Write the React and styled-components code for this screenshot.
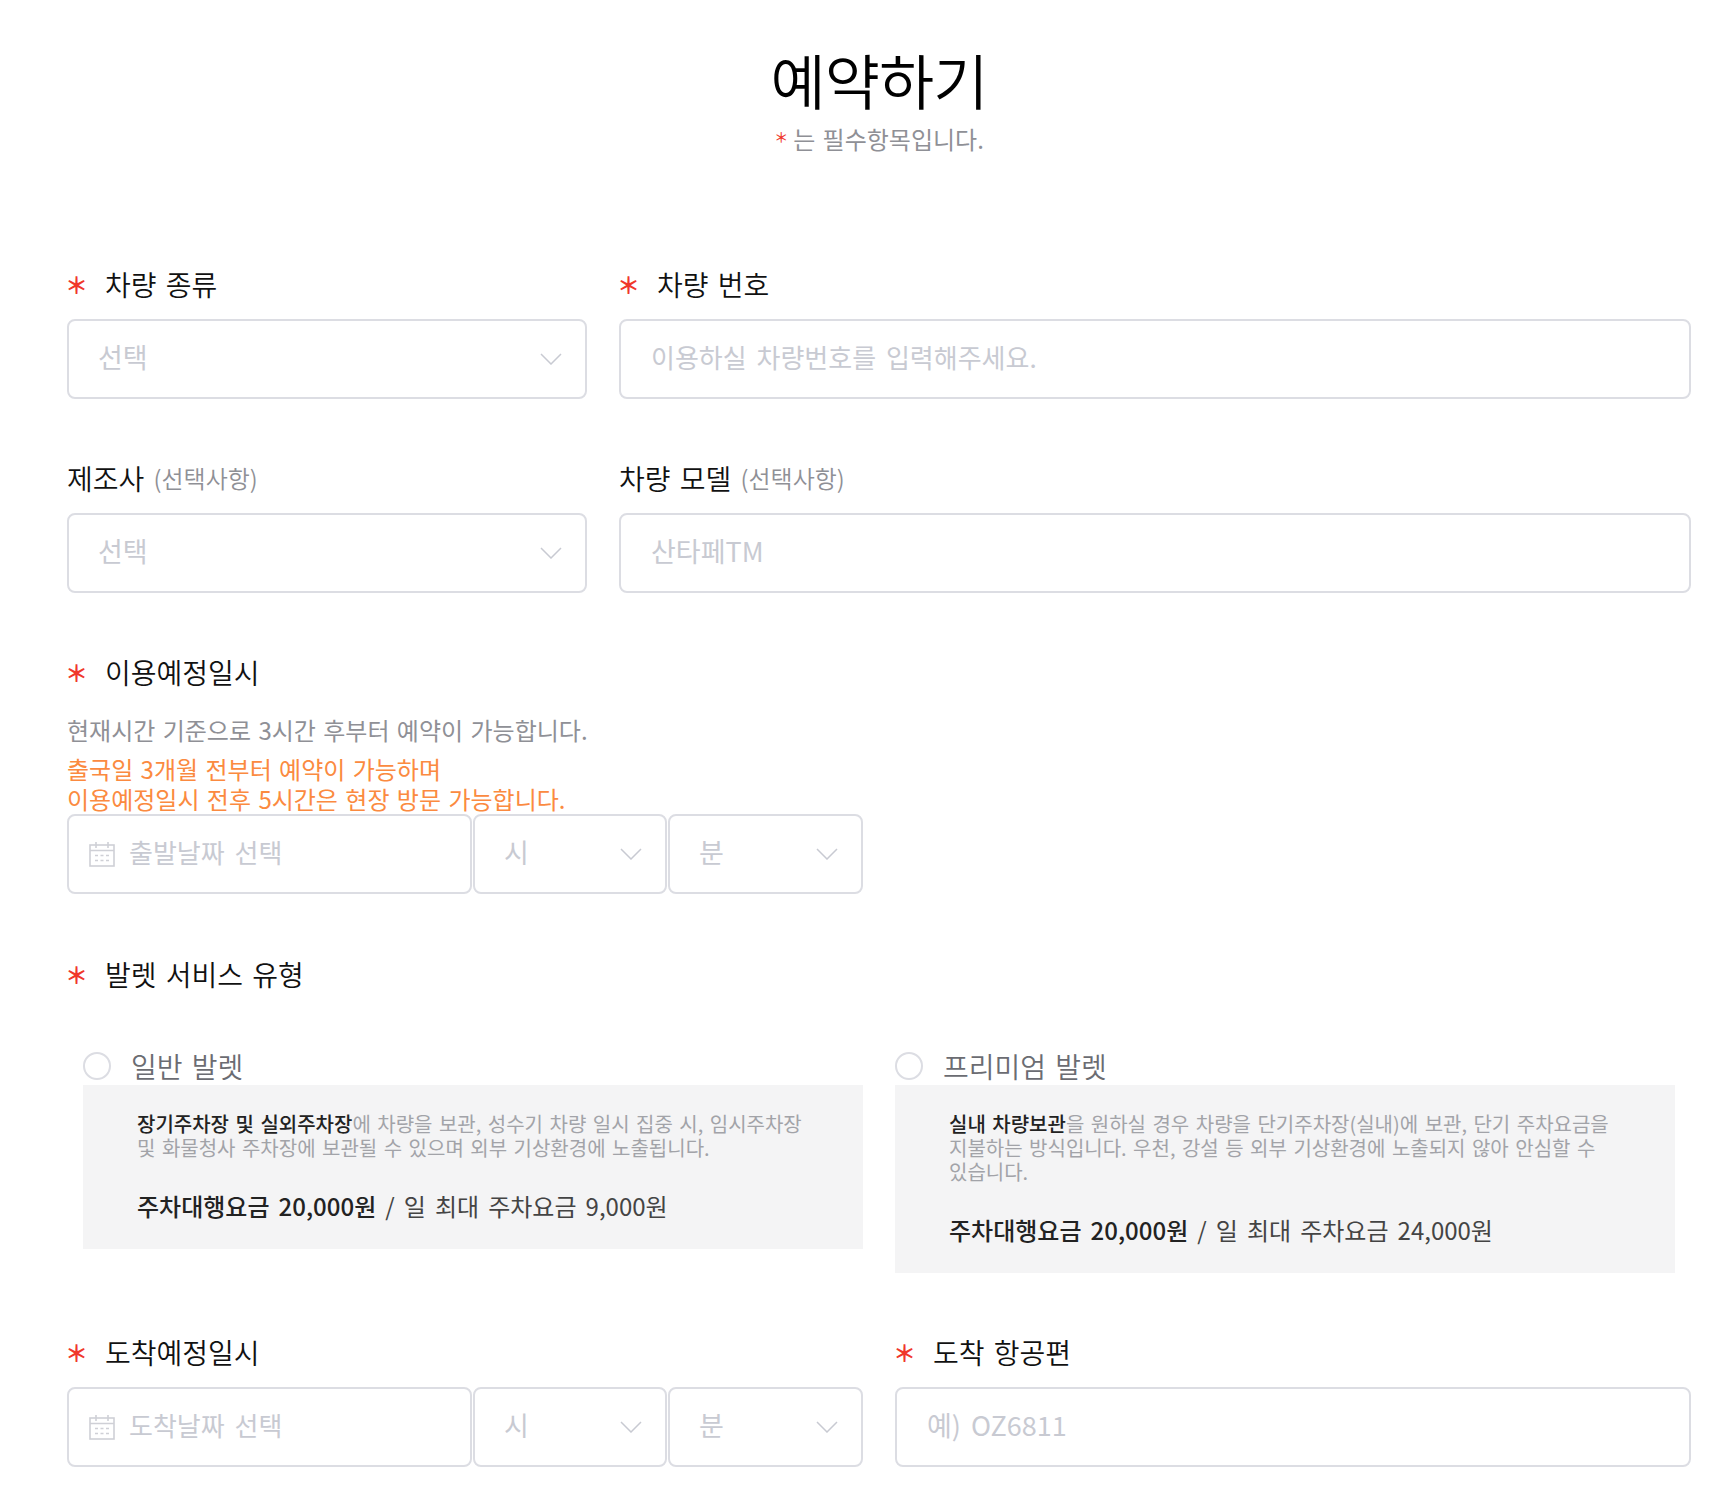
import styled, { createGlobalStyle } from 'styled-components';

const GlobalStyle = createGlobalStyle`
  html, body {
    margin: 0;
    padding: 0;
    background: #fff;
    font-family: "Noto Sans CJK KR", "Noto Sans", sans-serif;
  }
  * { box-sizing: border-box; }
`

const Required = () => <Star>＊</Star>

const ChevronIcon = () => (
  <svg width="22" height="12" viewBox="0 0 22 12" fill="none" stroke="#c8cad2" strokeWidth="1.5">
    <path d="M1 1l10 10L21 1" />
  </svg>
)

const Select = ({ text, width }) => (
  <SelectBox $width={width}>
    <Placeholder>{text}</Placeholder>
    <ChevronIcon />
  </SelectBox>
)

const CalendarIcon = () => (
  <svg width="26" height="25" viewBox="0 0 26 25" fill="none" stroke="#cfd0d6" strokeWidth="1.6">
    <rect x="1" y="3" width="24" height="21" />
    <path d="M1 8.5h24M7 0v6M19 0v6" />
    <path d="M6 13.5h14M6 18.5h14" strokeDasharray="3 2.5" />
  </svg>
)

const DateTime = ({ text }) => (
  <DateRow>
    <DateBox>
      <CalendarIcon />
      <BareInput placeholder={text} />
    </DateBox>
    <Select text="시" width="194px" />
    <Select text="분" width="195px" />
  </DateRow>
)

const App = () => {
  return (
    <Page>
      <GlobalStyle />
      <Header>
        <Title>예약하기</Title>
        <Sub><SubStar>＊</SubStar>는 필수항목입니다.</Sub>
      </Header>

      <TopGrid>
        <Field>
          <Label><Required />차량 종류</Label>
          <Select text="선택" />
        </Field>
        <Field>
          <Label><Required />차량 번호</Label>
          <Input placeholder="이용하실 차량번호를 입력해주세요." />
        </Field>
        <Field>
          <Label>제조사 <Optional>(선택사항)</Optional></Label>
          <Select text="선택" />
        </Field>
        <Field>
          <Label>차량 모델 <Optional>(선택사항)</Optional></Label>
          <Input $size="27px" placeholder="산타페TM" />
        </Field>
      </TopGrid>

      <Section>
        <Label><Required />이용예정일시</Label>
        <Note>현재시간 기준으로 3시간 후부터 예약이 가능합니다.</Note>
        <Warn>출국일 3개월 전부터 예약이 가능하며<br />이용예정일시 전후 5시간은 현장 방문 가능합니다.</Warn>
        <DateTime text="출발날짜 선택" />
      </Section>

      <ServiceSection>
        <Label><Required />발렛 서비스 유형</Label>
        <ServiceGrid>
          <Service>
            <RadioRow><Radio /><RadioText>일반 발렛</RadioText></RadioRow>
            <Card>
              <Desc><b>장기주차장 및 실외주차장</b>에 차량을 보관, 성수기 차량 일시 집중 시, 임시주차장 및 화물청사 주차장에 보관될 수 있으며 외부 기상환경에 노출됩니다.</Desc>
              <Price><b>주차대행요금 20,000원</b> / 일 최대 주차요금 9,000원</Price>
            </Card>
          </Service>
          <Service>
            <RadioRow><Radio /><RadioText>프리미엄 발렛</RadioText></RadioRow>
            <Card>
              <Desc><b>실내 차량보관</b>을 원하실 경우 차량을 단기주차장(실내)에 보관, 단기 주차요금을 지불하는 방식입니다. 우천, 강설 등 외부 기상환경에 노출되지 않아 안심할 수 있습니다.</Desc>
              <Price><b>주차대행요금 20,000원</b> / 일 최대 주차요금 24,000원</Price>
            </Card>
          </Service>
        </ServiceGrid>
      </ServiceSection>

      <BottomGrid>
        <Field>
          <Label><Required />도착예정일시</Label>
          <DateTime text="도착날짜 선택" />
        </Field>
        <Field>
          <Label><Required />도착 항공편</Label>
          <Input $size="27px" placeholder="예) OZ6811" />
        </Field>
      </BottomGrid>
    </Page>
  )
};

export default App


const Page = styled.div`
  width: 1728px;
  height: 1512px;
  padding: 0 37px 0 67px;
  overflow: hidden;
  color: #111;
`
const Header = styled.div`
  display: flex;
  flex-direction: column;
  align-items: center;
  padding-top: 36px;
  height: 261px;
`
const Title = styled.h1`
  margin: 0;
  font-size: 60px;
  font-weight: 350;
  line-height: 85px;
  letter-spacing: -1px;
  color: #000;
`
const Sub = styled.p`
  margin: 0;
  font-size: 24px;
  line-height: 30px;
  word-spacing: 2px;
  color: #8f9096;
`
const SubStar = styled.span`
  margin-right: 5px;
  font-size: 14px;
  font-weight: 500;
  vertical-align: 7px;
  color: #f0372b;
`
const TopGrid = styled.div`
  display: grid;
  grid-template-columns: 520px 1fr;
  column-gap: 32px;
  row-gap: 56px;
`
const Field = styled.div`
  display: flex;
  flex-direction: column;
  min-width: 0;
`
const Label = styled.label`
  display: flex;
  align-items: center;
  height: 46px;
  margin-bottom: 12px;
  font-size: 28px;
  font-weight: 350;
  line-height: 46px;
  white-space: pre;
  word-spacing: 3px;
  color: #111;
`
const Star = styled.span`
  flex: none;
  width: 40px;
  margin-left: -2px;
  font-size: 23px;
  font-weight: 700;
  line-height: 46px;
  color: #f0372b;
`
const Optional = styled.span`
  font-size: 24px;
  word-spacing: 0;
  color: #8f9096;
`
const boxStyles = `
  height: 80px;
  border: 2px solid #dcdde3;
  border-radius: 8px;
  background: #fff;
  font-family: inherit;
  word-spacing: 4px;
`
const Input = styled.input`
  ${boxStyles}
  width: 100%;
  padding: 0 30px 6px;
  outline: none;
  font-size: ${props => props.$size || '26px'};
  &::placeholder { color: #c8cad2; opacity: 1; }
`
const SelectBox = styled.div`
  ${boxStyles}
  display: flex;
  align-items: center;
  justify-content: space-between;
  flex: none;
  width: ${props => props.$width || '100%'};
  padding: 0 23px 0 29px;
`
const Placeholder = styled.span`
  margin-bottom: 6px;
  font-size: 27px;
  color: #c8cad2;
`
const Section = styled.div`
  margin-top: 56px;
`
const Note = styled.p`
  margin: 19px 0 0;
  font-size: 24px;
  line-height: 32px;
  word-spacing: 2px;
  color: #8f9096;
`
const Warn = styled.p`
  margin: 8px 0 0;
  font-size: 24px;
  line-height: 30px;
  word-spacing: 2px;
  color: #fb8a40;
`
const DateRow = styled.div`
  display: flex;
  gap: 1px;
`
const DateBox = styled.div`
  ${boxStyles}
  display: flex;
  align-items: center;
  gap: 14px;
  flex: none;
  width: 405px;
  padding: 0 20px;
`
const BareInput = styled.input`
  flex: 1;
  min-width: 0;
  border: 0;
  padding: 0 0 6px;
  outline: none;
  font-family: inherit;
  font-size: 26px;
  word-spacing: 4px;
  &::placeholder { color: #c8cad2; opacity: 1; }
`
const ServiceSection = styled.div`
  margin-top: 57px;
`
const ServiceGrid = styled.div`
  display: grid;
  grid-template-columns: 1fr 1fr;
  column-gap: 32px;
  padding: 0 16px;
  margin-top: 49px;
  align-items: start;
`
const Service = styled.div`
  display: flex;
  flex-direction: column;
`
const RadioRow = styled.div`
  display: flex;
  align-items: center;
  gap: 20px;
  height: 39px;
  word-spacing: 3px;
`
const Radio = styled.span`
  width: 28px;
  height: 28px;
  border: 2px solid #dcdde3;
  border-radius: 50%;
`
const RadioText = styled.span`
  font-size: 28px;
  font-weight: 350;
  color: #6b6c72;
`
const Card = styled.div`
  background: #f4f4f5;
  padding: 27px 54px 23px;
`
const Desc = styled.p`
  margin: 0;
  font-size: 20px;
  line-height: 24px;
  word-spacing: 2px;
  word-break: keep-all;
  color: #a2a3a8;
  & b { font-weight: 500; color: #222; }
`
const Price = styled.p`
  margin: 26px 0 0;
  font-size: 24px;
  line-height: 40px;
  word-spacing: 3.7px;
  color: #444;
  & b { font-weight: 500; color: #222; }
`
const BottomGrid = styled.div`
  display: grid;
  grid-template-columns: 1fr 1fr;
  column-gap: 32px;
  margin-top: 56px;
`
